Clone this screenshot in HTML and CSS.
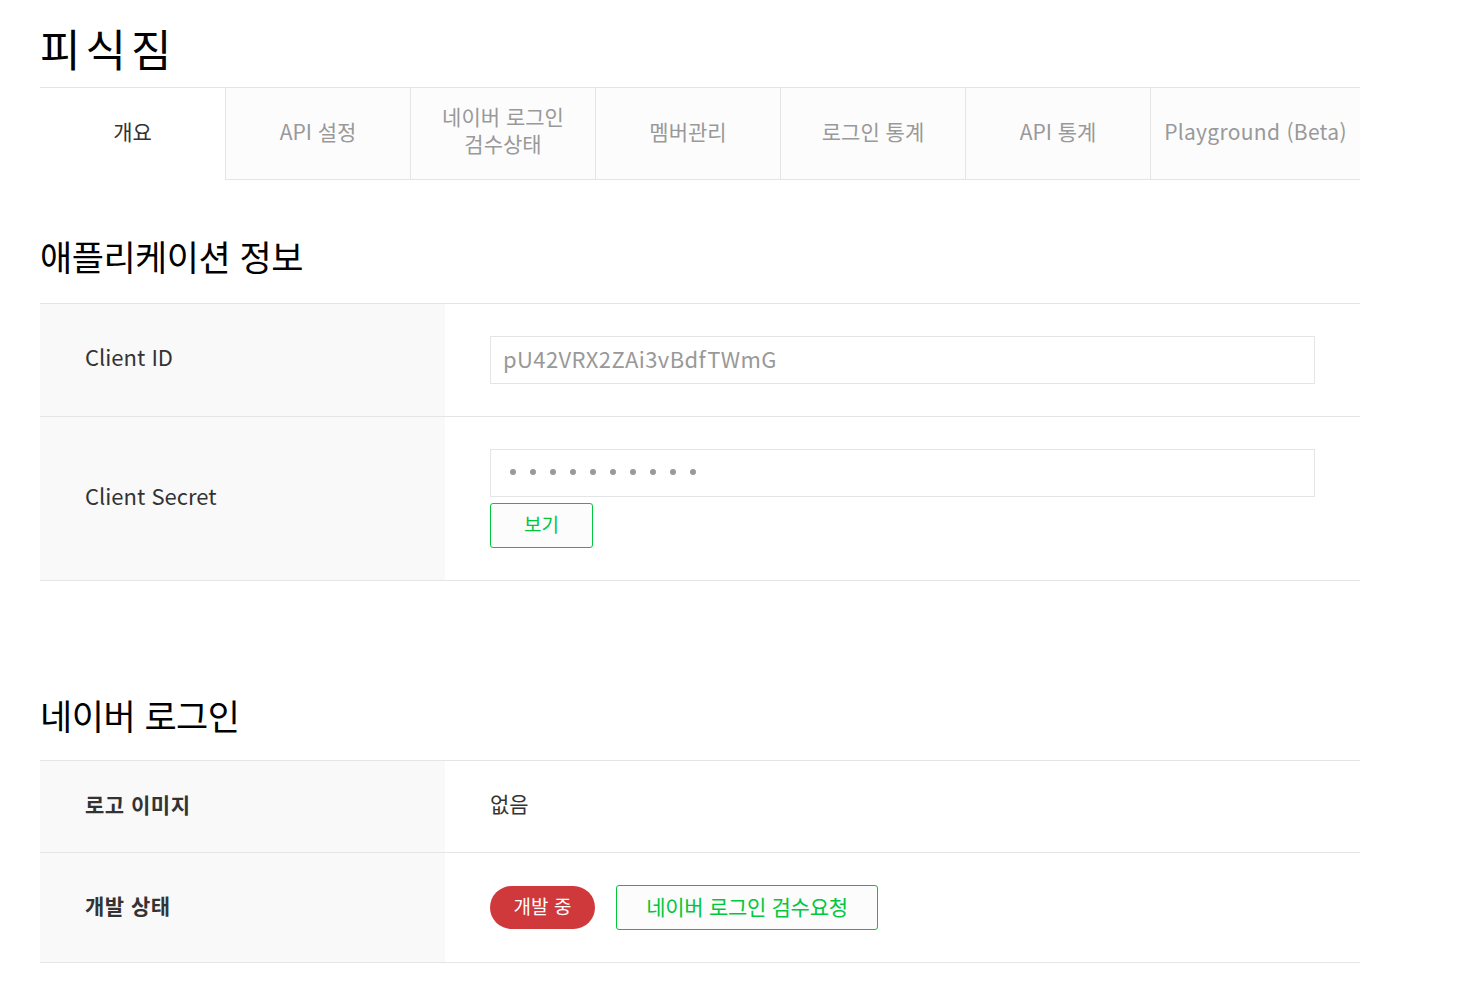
FILE: index.html
```html
<!DOCTYPE html>
<html lang="ko">
  <head>
    <meta charset="UTF-8">
    <meta name="viewport" content="width=device-width, initial-scale=1.0">
    <title>피식짐 - 애플리케이션</title>
    <link rel="stylesheet" href="styles.css">
  </head>
  <body>
    <div class="wrap">
      <h1 class="app-name">피식짐</h1>

      <ul class="tabs">
        <li class="tab on">개요</li>
        <li class="tab">API 설정</li>
        <li class="tab two-line">네이버 로그인<br>검수상태</li>
        <li class="tab">멤버관리</li>
        <li class="tab">로그인 통계</li>
        <li class="tab">API 통계</li>
        <li class="tab wide">Playground (Beta)</li>
      </ul>

      <h2 class="sec-title">애플리케이션 정보</h2>
      <div class="info-table">
        <div class="row">
          <div class="th">Client ID</div>
          <div class="td">
            <input type="text" class="field" value="pU42VRX2ZAi3vBdfTWmG" readonly>
          </div>
        </div>
        <div class="row">
          <div class="th">Client Secret</div>
          <div class="td">
            <div class="field secret">
              <i class="dot"></i><i class="dot"></i><i class="dot"></i><i class="dot"></i><i class="dot"></i>
              <i class="dot"></i><i class="dot"></i><i class="dot"></i><i class="dot"></i><i class="dot"></i>
            </div>
            <button type="button" class="btn btn-show">보기</button>
          </div>
        </div>
      </div>

      <h2 class="sec-title sec-gap">네이버 로그인</h2>
      <div class="info-table bold-th">
        <div class="row">
          <div class="th">로고 이미지</div>
          <div class="td"><span class="val">없음</span></div>
        </div>
        <div class="row">
          <div class="th">개발 상태</div>
          <div class="td inline">
            <span class="badge">개발 중</span>
            <button type="button" class="btn btn-review">네이버 로그인 검수요청</button>
          </div>
        </div>
      </div>
    </div>
  </body>
</html>
```

FILE: styles.css
```css
html, body { margin: 0; padding: 0; background: #fff; }
body { font-family: "Noto Sans CJK KR", "Noto Sans", sans-serif; color: #333; }
ul { margin: 0; padding: 0; list-style: none; }
.wrap { width: 1320px; padding: 0 40px; }

.app-name { margin: 0; padding: 18px 0 9px; height: 60px; font-size: 44px; line-height: 60px; font-weight: 400; color: #000; letter-spacing: 5px; }

.tabs { display: grid; grid-template-columns: repeat(6, 185px) 1fr; border-top: 1px solid #e5e5e5; }
.tab { display: flex; justify-content: center; align-items: center; box-sizing: border-box; height: 92px; padding-bottom: 6px; text-align: center;
  font-size: 21px; line-height: 26px; color: #999; letter-spacing: 0;
  background: #fcfcfc; border-left: 1px solid #e5e5e5; border-bottom: 1px solid #e5e5e5; }
.tab.on { background: #fff; color: #333; border-left: 0; border-bottom-color: #fff; }
.tab.two-line { line-height: 27px; padding-bottom: 8px; }
.tab.wide { letter-spacing: 0.3px; }

.sec-title { margin: 51px 0 22px; height: 50px; font-size: 35px; line-height: 50px; font-weight: 400; color: #000; letter-spacing: -0.5px; }
.sec-gap { margin-top: 109px; margin-bottom: 20px; }

.info-table { border-top: 1px solid #e5e5e5; }
.row { display: flex; border-bottom: 1px solid #e5e5e5; }
.th { display: flex; align-items: center; width: 360px; padding: 0 0 8px 45px; background: #f9f9f9;
  font-size: 22px; color: #333; letter-spacing: 0; }
.bold-th .th { font-weight: 700; font-size: 21px; letter-spacing: 0.5px; padding-bottom: 6px; }
.td { flex: 1; padding: 32px 45px; }
.td.inline { display: flex; align-items: center; gap: 21px; }

.field { display: block; box-sizing: border-box; width: 825px; height: 48px; margin: 0; padding: 0 12px 5px;
  border: 1px solid #e5e5e5; background: #fff; font-family: inherit; font-size: 22px; color: #999; letter-spacing: 0.4px; outline: none; }
.secret { display: flex; align-items: center; gap: 14px; padding: 0 0 2px 19px; }
.dot { display: block; width: 6px; height: 6px; border-radius: 50%; background: #999; }

.val { display: block; font-size: 21px; line-height: 27px; margin-top: -3px; margin-bottom: 3px; color: #333; }

.btn { all: unset; box-sizing: border-box; display: inline-flex; justify-content: center; align-items: center; padding-bottom: 4px;
  border: 1px solid #00c73c; border-radius: 3px; background: #fcfcfc; color: #00c73c; cursor: pointer; }
.btn-show { margin-top: 6px; width: 103px; height: 45px; font-size: 19px; }
.btn-review { width: 262px; height: 45px; font-size: 21px; letter-spacing: -0.3px; }
.badge { display: inline-flex; justify-content: center; align-items: center; box-sizing: border-box; width: 105px; height: 43px; padding-bottom: 4px;
  border-radius: 22px; background: #d0393b; color: #fff; font-size: 19px; }
```
